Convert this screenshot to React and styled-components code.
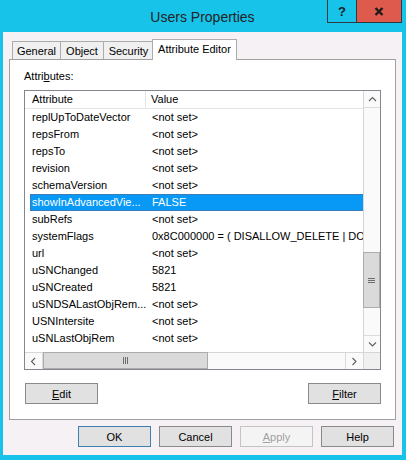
import React from 'react';
import styled, { createGlobalStyle } from 'styled-components';

// 속성 목록 데이터
const attributes = [
    ['replUpToDateVector', '<not set>'],
    ['repsFrom', '<not set>'],
    ['repsTo', '<not set>'],
    ['revision', '<not set>'],
    ['schemaVersion', '<not set>'],
    ['showInAdvancedVie...', 'FALSE', true],
    ['subRefs', '<not set>'],
    ['systemFlags', '0x8C000000 = ( DISALLOW_DELETE | DOMAIN_DISALLOW_RENAME )'],
    ['url', '<not set>'],
    ['uSNChanged', '5821'],
    ['uSNCreated', '5821'],
    ['uSNDSALastObjRem...', '<not set>'],
    ['USNIntersite', '<not set>'],
    ['uSNLastObjRem', '<not set>'],
];

const tabs = [
    { label: 'General', width: 49 },
    { label: 'Object', width: 44 },
    { label: 'Security', width: 51 },
    { label: 'Attribute Editor', width: 85, active: true },
];

function Chevron({ dir }) {
    const d = {
        up: 'M1 5 L4.5 1.5 L8 5',
        down: 'M1 1.5 L4.5 5 L8 1.5',
        left: 'M5 1 L1.5 4.5 L5 8',
        right: 'M1.5 1 L5 4.5 L1.5 8',
    }[dir];
    const vertical = dir === 'up' || dir === 'down';
    return (
        <svg
            width={vertical ? 9 : 7}
            height={vertical ? 7 : 9}
            viewBox={vertical ? '0 0 9 7' : '0 0 7 9'}
        >
            <path d={d} fill="none" stroke="#606060" strokeWidth="1.1" />
        </svg>
    );
}

function App() {
    return (
        <>
            <GlobalStyle />
            <Window>
                <TitleBar>
                    <span />
                    <Title>Users Properties</Title>
                    <CaptionButtons>
                        <CaptionButton $w={30} $bg="#18c3ea">
                            ?
                        </CaptionButton>
                        <CaptionButton $w={46} $bg="#dd5a4c" $join>
                            <svg width="10" height="9" viewBox="0 0 10 9">
                                <path
                                    d="M1.5 1 L8.5 8 M8.5 1 L1.5 8"
                                    stroke="#1c1c1c"
                                    strokeWidth="2.4"
                                />
                            </svg>
                        </CaptionButton>
                    </CaptionButtons>
                </TitleBar>
                <Client>
                    <TabStrip>
                        {tabs.map(t => (
                            <Tab key={t.label} $w={t.width} $active={t.active}>
                                {t.label}
                            </Tab>
                        ))}
                    </TabStrip>
                    <Panel>
                        <Label>
                            Attri<u>b</u>utes:
                        </Label>
                        <ListBox>
                            <ListContent>
                                <Header>
                                    <HeaderCell $first>Attribute</HeaderCell>
                                    <HeaderCell>Value</HeaderCell>
                                </Header>
                                <Rows>
                                    {attributes.map(([name, value, sel]) => (
                                        <Row key={name} $selected={sel}>
                                            <Cell>{name}</Cell>
                                            <Cell>{value}</Cell>
                                        </Row>
                                    ))}
                                </Rows>
                            </ListContent>
                            <VScroll>
                                <ArrowBox $edge="bottom">
                                    <Chevron dir="up" />
                                </ArrowBox>
                                <VTrack $offset={144}>
                                    <VThumb $size={56}>
                                        <Grip $vertical>
                                            <i />
                                            <i />
                                            <i />
                                        </Grip>
                                    </VThumb>
                                </VTrack>
                                <ArrowBox $edge="top">
                                    <Chevron dir="down" />
                                </ArrowBox>
                            </VScroll>
                            <HScroll>
                                <HArrowBox $edge="right">
                                    <Chevron dir="left" />
                                </HArrowBox>
                                <HThumb $size={165}>
                                    <Grip>
                                        <i />
                                        <i />
                                        <i />
                                    </Grip>
                                </HThumb>
                                <HTrack />
                                <HArrowBox $edge="left">
                                    <Chevron dir="right" />
                                </HArrowBox>
                            </HScroll>
                            <Corner />
                        </ListBox>
                        <PanelButtons>
                            <Button $w={73}>
                                <u>E</u>dit
                            </Button>
                            <Button $w={73}>
                                <u>F</u>ilter
                            </Button>
                        </PanelButtons>
                    </Panel>
                    <Footer>
                        <Button $w={73} $primary>
                            OK
                        </Button>
                        <Button $w={73}>Cancel</Button>
                        <Button $w={73} disabled>
                            <u>A</u>pply
                        </Button>
                        <Button $w={73}>Help</Button>
                    </Footer>
                </Client>
            </Window>
        </>
    );
}

export default App;

const GlobalStyle = createGlobalStyle`
    html, body {
        margin: 0;
        padding: 0;
        background: #ffffff;
    }
    body {
        font-family: "Liberation Sans", Arial, sans-serif;
        font-size: 11px;
        color: #000;
    }
    * {
        box-sizing: border-box;
    }
`;

const Window = styled.div`
    width: 406px;
    height: 460px;
    background: #18c3ea;
    padding: 0 4px 5px 3px;
    display: flex;
    flex-direction: column;
`;

const TitleBar = styled.div`
    height: 32px;
    display: grid;
    grid-template-columns: 1fr auto 1fr;
    align-items: start;
`;

const Title = styled.div`
    font-size: 14px;
    line-height: 32px;
    color: #222;
    padding-top: 1px;
`;

const CaptionButtons = styled.div`
    justify-self: end;
    display: flex;
`;

const CaptionButton = styled.div`
    width: ${props => props.$w}px;
    height: 23px;
    margin-left: ${props => (props.$join ? '-1px' : '0')};
    background: ${props => props.$bg};
    border: 1px solid #2e3a40;
    border-top: none;
    display: flex;
    align-items: center;
    justify-content: center;
    font-weight: bold;
    font-size: 13px;
    color: #1c1c1c;
`;

const Client = styled.div`
    flex: 1;
    background: #f5f1f5;
    padding: 7px 6px 8px 6px;
    display: flex;
    flex-direction: column;
`;

const TabStrip = styled.div`
    height: 21px;
    display: flex;
    align-items: flex-end;
    padding-left: 3px;
    margin-bottom: -1px;
    position: relative;
    z-index: 1;
`;

const Tab = styled.div`
    width: ${props => props.$w}px;
    height: ${props => (props.$active ? '21px' : '18px')};
    margin-left: ${props => (props.$active ? '-2px' : '-1px')};
    margin-bottom: ${props => (props.$active ? '0' : '1px')};
    background: ${props => (props.$active ? '#ffffff' : '#f0f0f0')};
    border: 1px solid #acacac;
    border-bottom: none;
    display: flex;
    justify-content: center;
    align-items: center;
    padding-bottom: ${props => (props.$active ? '3px' : '0')};
    color: #000;
    white-space: nowrap;
    &:first-child {
        margin-left: 0;
    }
`;

const Panel = styled.div`
    height: 361px;
    background: #ffffff;
    border: 1px solid #a0a0a0;
    padding: 10px 14px 15px 14px;
    display: flex;
    flex-direction: column;
`;

const Label = styled.div`
    line-height: 13px;
    margin-bottom: 7px;
`;

const ListBox = styled.div`
    height: 280px;
    border: 1px solid #828790;
    display: grid;
    grid-template-columns: 1fr 17px;
    grid-template-rows: 1fr 17px;
    background: #ffffff;
`;

const ListContent = styled.div`
    min-width: 0;
    overflow: hidden;
    display: flex;
    flex-direction: column;
`;

const Header = styled.div`
    height: 18px;
    flex-shrink: 0;
    display: grid;
    grid-template-columns: 121px 1fr;
    border-bottom: 1px solid #e5e5e5;
`;

const HeaderCell = styled.div`
    line-height: 17px;
    padding-left: ${props => (props.$first ? '7px' : '5px')};
    border-right: ${props => (props.$first ? '1px solid #e5e5e5' : 'none')};
`;

const Rows = styled.div`
    flex: 1;
    overflow: hidden;
`;

const Row = styled.div`
    height: 17px;
    margin-left: 5px;
    display: grid;
    grid-template-columns: 120px 1fr;
    border: 1px solid ${props => (props.$selected ? '#3a7db8' : 'transparent')};
    border-right: none;
    background: ${props => (props.$selected ? '#0799f5' : 'transparent')};
    color: ${props => (props.$selected ? '#ffffff' : '#000000')};
`;

const Cell = styled.div`
    line-height: 15px;
    padding-left: 1px;
    white-space: nowrap;
    overflow: hidden;
`;

const VScroll = styled.div`
    display: flex;
    flex-direction: column;
    border-left: 1px solid #d6d6d6;
    background: #fafafa;
`;

const ArrowBox = styled.div`
    height: 17px;
    flex-shrink: 0;
    display: flex;
    align-items: center;
    justify-content: center;
    ${props => `border-${props.$edge}: 1px solid #dadada;`}
`;

const VTrack = styled.div`
    flex: 1;
    padding-top: ${props => props.$offset}px;
`;

const VThumb = styled.div`
    height: ${props => props.$size}px;
    background: #dadada;
    border: 1px solid #acacac;
    margin-left: -1px;
    display: flex;
    align-items: center;
    justify-content: center;
`;

const Grip = styled.div`
    display: flex;
    flex-direction: ${props => (props.$vertical ? 'column' : 'row')};
    gap: 1px;
    i {
        display: block;
        background: #6d6d6d;
        width: ${props => (props.$vertical ? '7px' : '1px')};
        height: ${props => (props.$vertical ? '1px' : '7px')};
    }
`;

const HScroll = styled.div`
    display: flex;
    border-top: 1px solid #d6d6d6;
    background: #fafafa;
`;

const HArrowBox = styled.div`
    width: 18px;
    flex-shrink: 0;
    display: flex;
    align-items: center;
    justify-content: center;
    ${props => `border-${props.$edge}: 1px solid #dadada;`}
`;

const HThumb = styled.div`
    width: ${props => props.$size}px;
    background: #dadada;
    border: 1px solid #acacac;
    margin-top: -1px;
    display: flex;
    align-items: center;
    justify-content: center;
`;

const HTrack = styled.div`
    flex: 1;
`;

const Corner = styled.div`
    background: #f0f0f0;
    border-top: 1px solid #d6d6d6;
    border-left: 1px solid #d6d6d6;
`;

const PanelButtons = styled.div`
    display: flex;
    justify-content: space-between;
    margin-top: 13px;
    padding-left: 1px;
`;

const Button = styled.button`
    width: ${props => props.$w}px;
    height: 21px;
    padding: 0;
    font-family: inherit;
    font-size: 11px;
    background: ${props => (props.disabled ? '#f4f4f4' : '#e1e1e1')};
    border: 1px solid
        ${props =>
            props.$primary ? '#3c7fb1' : props.disabled ? '#c4c4c4' : '#8a8a8a'};
    color: ${props => (props.disabled ? '#a0a0a0' : '#000')};
    border-radius: 0;
`;

const Footer = styled.div`
    display: flex;
    justify-content: flex-end;
    gap: 8px;
    margin-top: 6px;
    padding-right: 2px;
`;
